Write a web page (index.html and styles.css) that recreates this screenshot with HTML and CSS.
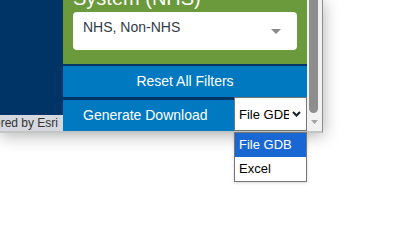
FILE: index.html
```html
<!DOCTYPE html>
<html lang="en">
<head>
<meta charset="utf-8">
<title>Filters</title>
<link rel="stylesheet" href="styles.css">
</head>
<body>
<div class="frame">
  <div class="map">
    <div class="map-fill"></div>
    <div class="attribution"><span>Powered by Esri</span></div>
  </div>
  <div class="panel">
    <section class="filter">
      <h2 class="filter-title">System (NHS)</h2>
      <div class="combo">
        <span class="combo-value">NHS, Non-NHS</span>
        <svg class="combo-arrow" width="10" height="5" viewBox="0 0 10 5"><path d="M0 0H10L5 5Z" fill="#8a8a8a"/></svg>
      </div>
    </section>
    <div class="btn-reset">Reset All Filters</div>
    <div class="download-row">
      <div class="btn-download">Generate Download</div>
      <div class="select-wrap">
        <div class="select">
          <span class="select-value">File GDB</span>
          <svg class="select-chevron" width="9" height="6" viewBox="0 0 9 6"><path d="M1 1L4.5 4.5L8 1" fill="none" stroke="#1b1b2b" stroke-width="2"/></svg>
        </div>
      </div>
    </div>
  </div>
  <div class="scrollbar">
    <div class="thumb"></div>
    <svg class="scroll-arrow" width="7" height="4" viewBox="0 0 7 4"><path d="M0 0H7L3.5 4Z" fill="#a3a3a3"/></svg>
  </div>
</div>
<div class="dropdown" role="listbox">
  <div class="option selected" role="option">File GDB</div>
  <div class="option" role="option">Excel</div>
</div>
</body>
</html>
```
FILE: styles.css
```css
html, body {
  margin: 0;
  padding: 0;
  background: #ffffff;
  font-family: "Liberation Sans", Arial, sans-serif;
}

body {
  position: relative;
  min-height: 235px;
}

.frame {
  display: flex;
  width: 323px;
  height: 133px;
  box-sizing: border-box;
  border-right: 1px solid #8f8f8f;
  border-bottom: 2px solid #c4c4c4;
  box-shadow: 0 2px 16px rgba(0, 0, 0, 0.33);
  background: #003366;
}

.map {
  width: 63px;
  display: flex;
  flex-direction: column;
  background: #003366;
}

.map-fill {
  flex: 1;
}

.attribution {
  height: 16px;
  background: #d5d9df;
  display: flex;
  justify-content: flex-end;
  overflow: hidden;
  padding-right: 5px;
}

.attribution span {
  flex-shrink: 0;
  white-space: nowrap;
  font-size: 12px;
  line-height: 16px;
  color: #323232;
}

.panel {
  width: 244px;
  display: flex;
  flex-direction: column;
  background: #003366;
}

.filter {
  height: 64px;
  box-sizing: border-box;
  background: #6a9a3b;
  padding: 0 10px;
}

.filter-title {
  margin: -14px 0 2px;
  font-size: 20px;
  line-height: 24px;
  font-weight: normal;
  color: #ffffff;
  white-space: nowrap;
}

.combo {
  height: 38px;
  box-sizing: border-box;
  background: #ffffff;
  border-radius: 4px;
  padding: 5px 16px 0 10px;
  display: flex;
  justify-content: space-between;
  align-items: flex-start;
}

.combo-value {
  font-size: 14px;
  line-height: 20px;
  color: #323a46;
}

.combo-arrow {
  margin-top: 12px;
}

.btn-reset {
  margin-top: 2px;
  height: 31px;
  line-height: 31px;
  background: #0079c1;
  color: #ffffff;
  font-size: 14px;
  text-align: center;
}

.download-row {
  display: flex;
  align-items: flex-end;
  height: 34px;
}

.btn-download {
  flex: 1;
  height: 31px;
  line-height: 31px;
  background: #0079c1;
  color: #ffffff;
  font-size: 14px;
  padding-left: 20px;
}

.select-wrap {
  width: 73px;
  height: 34px;
}

.select {
  height: 34px;
  box-sizing: border-box;
  border: 1px solid #767676;
  background: #ffffff;
  display: flex;
  align-items: center;
  padding: 0 5px 0 4px;
  gap: 3px;
}

.select-value {
  flex: 1;
  overflow: hidden;
  white-space: nowrap;
  font-size: 13px;
  color: #000000;
}

.select-chevron {
  flex-shrink: 0;
}

.dropdown {
  position: absolute;
  top: 132px;
  left: 234px;
  z-index: 10;
  width: 73px;
  box-sizing: border-box;
  background: #ffffff;
  border: 1px solid #767676;
  box-shadow: 0 1px 3px rgba(0, 0, 0, 0.15);
}

.option {
  height: 24px;
  line-height: 24px;
  padding-left: 4px;
  font-size: 13px;
  color: #000000;
}

.option.selected {
  background: #1967d2;
  color: #ffffff;
}

.scrollbar {
  width: 15px;
  background: #f1f1f1;
  display: flex;
  flex-direction: column;
  align-items: flex-start;
}

.thumb {
  width: 9px;
  height: 113px;
  margin-left: 2px;
  background: #8e8e8e;
  border-radius: 0 0 5px 5px;
}

.scroll-arrow {
  margin: 7px 0 0 4px;
}
```
